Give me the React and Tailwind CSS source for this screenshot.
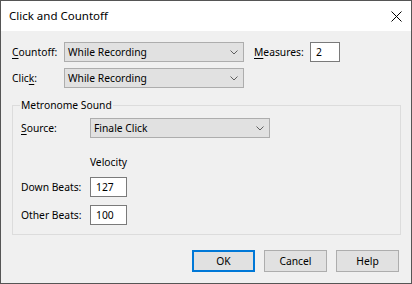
import React from "react";

const Chevron = () => (
  <svg width="8" height="5" viewBox="0 0 8 5" className="shrink-0">
    <path d="M0.5 0.5 L4 4 L7.5 0.5" stroke="#5f5f5f" strokeWidth="1" fill="none" />
  </svg>
);

const Combo = ({ value }) => (
  <div className="w-[180px] h-[20px] border border-[#adadad] bg-[#e1e1e1] flex items-center justify-between pl-[3px] pr-[5px]">
    <span>{value}</span>
    <Chevron />
  </div>
);

const Box = ({ value, w }) => (
  <div className={`${w} h-[20px] border border-[#7a7a7a] bg-white flex items-center pl-[5px]`}>
    {value}
  </div>
);

const Btn = ({ children, def }) => (
  <div
    className={`w-[63px] h-[22px] flex items-center justify-center bg-[#e1e1e1] ${
      def ? "border-2 border-[#0078d7]" : "border border-[#adadad]"
    }`}
  >
    {children}
  </div>
);

const U = ({ children }) => <span className="underline underline-offset-[2px]">{children}</span>;

export default function App() {
  return (
    <div className="w-[412px] h-[284px] border border-[#555555] bg-[#f0f0f0] flex flex-col font-['Noto_Sans',sans-serif] text-[10.3px] text-black leading-[14px] overflow-hidden">
      <div className="h-[30px] bg-white flex items-center justify-between pl-[8px] pr-[9px] shrink-0">
        <span className="text-[11.5px]">Click and Countoff</span>
        <svg width="11" height="11" viewBox="0 0 11 11">
          <path d="M0.5 0.5 L10.5 10.5 M10.5 0.5 L0.5 10.5" stroke="#000" strokeWidth="1" />
        </svg>
      </div>
      <div className="flex flex-col pl-[11px] pr-[10px] pt-[11px]">
        <div className="flex items-center h-[20px]">
          <span className="w-[52px]">
            <U>C</U>ountoff:
          </span>
          <Combo value="While Recording" />
          <span className="ml-[10px] w-[56px]">
            <U>M</U>easures:
          </span>
          <Box value="2" w="w-[30px]" />
        </div>
        <div className="flex items-center h-[20px] mt-[6px]">
          <span className="w-[52px]">
            Clic<U>k</U>:
          </span>
          <Combo value="While Recording" />
        </div>
        <div className="relative mt-[17px] border border-[#dcdcdc] pl-[8px] pt-[12px] pb-[9px] flex flex-col">
          <span className="absolute top-[-8px] left-[7px] px-[1px] bg-[#f0f0f0]">Metronome Sound</span>
          <div className="flex items-center h-[20px]">
            <span className="w-[69px]">
              <U>S</U>ource:
            </span>
            <Combo value="Finale Click" />
          </div>
          <div className="flex mt-[17px]">
            <span className="w-[68px]" />
            <span className="w-[39px] text-center">Velocity</span>
          </div>
          <div className="flex items-center h-[20px] mt-[8px]">
            <span className="w-[69px]">Down Beats:</span>
            <Box value="127" w="w-[37px]" />
          </div>
          <div className="flex items-center h-[20px] mt-[8px]">
            <span className="w-[69px]">Other Beats:</span>
            <Box value="100" w="w-[37px]" />
          </div>
        </div>
        <div className="flex justify-end gap-[9px] mt-[15px] mr-[2px]">
          <Btn def>OK</Btn>
          <Btn>Cancel</Btn>
          <Btn>Help</Btn>
        </div>
      </div>
    </div>
  );
}
